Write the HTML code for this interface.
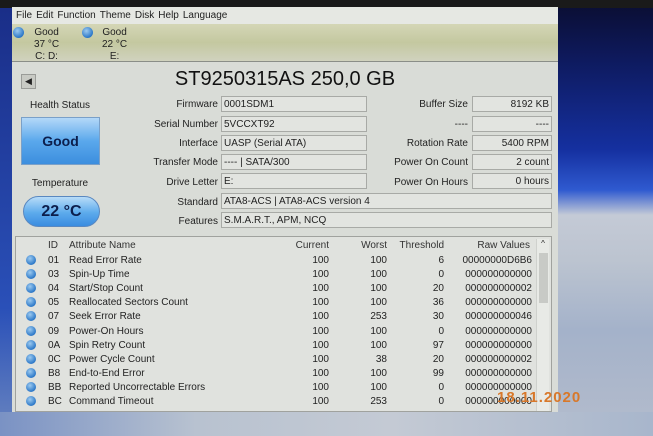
<!DOCTYPE html>
<html><head><meta charset="utf-8"><style>
*{margin:0;padding:0;box-sizing:border-box}
body{width:653px;height:436px;overflow:hidden;position:relative;font-family:"Liberation Sans","DejaVu Sans",sans-serif;color:#222;background:#a8b4c8}
.a{position:absolute}
#top{left:0;top:0;width:653px;height:8px;background:#1a1a1a}
#lstrip{left:0;top:8px;width:12px;height:428px;background:linear-gradient(180deg,#1a2e88,#2a50b8 300px,#6a86c0)}
#right{left:558px;top:0;width:95px;height:436px;background:linear-gradient(180deg,#0a0d30 0,#0e1a5e 60px,#1530a0 150px,#2f5ad0 190px,#c4cad6 215px,#bcc4d0 260px,#a4b2ca 330px,#b4bccc 436px)}
#bottom{left:0;top:412px;width:653px;height:24px;background:linear-gradient(90deg,#7a92c4,#b8c2d0 30%,#c4cad4 60%,#a8b6cc)}
#win{left:12px;top:7px;width:546px;height:405px;background:#d9dcd7}
#menu{left:0;top:0;width:546px;height:17px;background:#e6e8e3;font-size:10px;padding:3px 0 0 4px;word-spacing:3px}
#menu span{margin-right:4px}
#disks{left:0;top:17px;width:546px;height:38px;background:linear-gradient(180deg,#d4d6b6,#c4c8a0 50%,#d0d2be);border-bottom:1px solid #8a8e88;font-size:10px}
.dot{width:11px;height:11px;border-radius:50%;background:radial-gradient(circle at 40% 35%,#9ccaf0,#2c78c8 70%,#1a5aa8)}
.lbl{font-size:10px;text-align:right;width:120px}
.box{background:#e2e4e0;border:1px solid #a8aaa6;font-size:10px;height:16px;padding:1px 2px;line-height:13px}
.r{text-align:right}
#table{left:3px;top:229px;width:537px;height:176px;background:#e0e2de;border:1px solid #a0a29e;font-size:10px}
.row{position:absolute;left:0;width:520px;height:14px;line-height:14px}
.row span{position:absolute}
</style></head><body>
<div class="a" id="right"></div>
<div class="a" id="top"></div>
<div class="a" id="lstrip"></div>
<div class="a" id="bottom"></div>
<div class="a" id="win">
 <div class="a" id="menu"><span>File</span><span>Edit</span><span>Function</span><span>Theme</span><span>Disk</span><span>Help</span><span>Language</span></div>
 <div class="a" id="disks">
  <div class="a dot" style="left:1px;top:3px"></div>
  <div class="a" style="left:22px;top:3px;line-height:12px;text-align:center">Good<br>37 °C<br>C: D:</div>
  <div class="a dot" style="left:70px;top:3px"></div>
  <div class="a" style="left:90px;top:3px;line-height:12px;text-align:center">Good<br>22 °C<br>E:</div>
 </div>
 <div class="a" style="left:9px;top:67px;width:15px;height:15px;background:#c8cac4;border:1px solid #9a9c98;font-size:9px;line-height:13px;text-align:center">◀</div>
 <div class="a" style="left:120px;top:61px;width:306px;text-align:center;font-size:20px;color:#111">ST9250315AS 250,0 GB</div>
 <div class="a" style="left:8px;top:93px;width:80px;text-align:center;font-size:10px">Health Status</div>
 <div class="a" style="left:9px;top:110px;width:79px;height:48px;background:linear-gradient(180deg,#b4d8f8,#5aa8ec 50%,#3c8ede);border:1px solid #7aa0c8;font-size:14px;font-weight:bold;color:#0c1e4c;text-align:center;line-height:46px">Good</div>
 <div class="a" style="left:8px;top:171px;width:80px;text-align:center;font-size:10px">Temperature</div>
 <div class="a" style="left:11px;top:189px;width:77px;height:31px;border-radius:16px;background:linear-gradient(180deg,#b8dcf8,#5caaec 55%,#3a8ce0);border:1px solid #5a88c0;font-size:16px;font-weight:bold;color:#0c1e4c;text-align:center;line-height:29px">22 °C</div>

 <div class="a lbl" style="left:86px;top:92px">Firmware</div><div class="a box" style="left:209px;top:89px;width:146px">0001SDM1</div>
 <div class="a lbl" style="left:86px;top:112px">Serial Number</div><div class="a box" style="left:209px;top:109px;width:146px">5VCCXT92</div>
 <div class="a lbl" style="left:86px;top:131px">Interface</div><div class="a box" style="left:209px;top:128px;width:146px">UASP (Serial ATA)</div>
 <div class="a lbl" style="left:86px;top:150px">Transfer Mode</div><div class="a box" style="left:209px;top:147px;width:146px">---- | SATA/300</div>
 <div class="a lbl" style="left:86px;top:170px">Drive Letter</div><div class="a box" style="left:209px;top:166px;width:146px">E:</div>
 <div class="a lbl" style="left:86px;top:190px">Standard</div><div class="a box" style="left:209px;top:186px;width:331px">ATA8-ACS | ATA8-ACS version 4</div>
 <div class="a lbl" style="left:86px;top:209px">Features</div><div class="a box" style="left:209px;top:205px;width:331px">S.M.A.R.T., APM, NCQ</div>

 <div class="a lbl" style="left:336px;top:92px">Buffer Size</div><div class="a box r" style="left:460px;top:89px;width:80px">8192 KB</div>
 <div class="a lbl" style="left:336px;top:112px">----</div><div class="a box r" style="left:460px;top:109px;width:80px">----</div>
 <div class="a lbl" style="left:336px;top:131px">Rotation Rate</div><div class="a box r" style="left:460px;top:128px;width:80px">5400 RPM</div>
 <div class="a lbl" style="left:336px;top:150px">Power On Count</div><div class="a box r" style="left:460px;top:147px;width:80px">2 count</div>
 <div class="a lbl" style="left:336px;top:170px">Power On Hours</div><div class="a box r" style="left:460px;top:166px;width:80px">0 hours</div>

 <div class="a" id="table">
  <div class="a" style="right:2px;top:2px;width:13px;height:172px;background:#e8eae6;border-left:1px solid #cfd1cd"><div style="position:absolute;left:2px;top:14px;width:9px;height:50px;background:#c8cac6"></div><div style="font-size:8px;text-align:center">^</div></div>
  <div class="row" style="top:2px;color:#333"><span style="left:32px">ID</span><span style="left:53px">Attribute Name</span><span style="right:207px">Current</span><span style="right:149px">Worst</span><span style="right:92px">Threshold</span><span style="right:6px">Raw Values</span></div>
 </div>
</div>
<div class="a" style="left:497px;top:389px;font-size:15px;font-weight:bold;color:#d8782a;letter-spacing:1px">18.11.2020</div>
<script>
var d=[["01","Read Error Rate",100,100,6,"00000000D6B6"],["03","Spin-Up Time",100,100,0,"000000000000"],["04","Start/Stop Count",100,100,20,"000000000002"],["05","Reallocated Sectors Count",100,100,36,"000000000000"],["07","Seek Error Rate",100,253,30,"000000000046"],["09","Power-On Hours",100,100,0,"000000000000"],["0A","Spin Retry Count",100,100,97,"000000000000"],["0C","Power Cycle Count",100,38,20,"000000000002"],["B8","End-to-End Error",100,100,99,"000000000000"],["BB","Reported Uncorrectable Errors",100,100,0,"000000000000"],["BC","Command Timeout",100,253,0,"000000000000"]];
var t=document.getElementById('table'),h='';
d.forEach(function(r,i){h+='<div class="row" style="top:'+(17+i*14.1)+'px"><span class="dot" style="left:10px;top:1px;width:10px;height:10px;border-radius:50%"></span><span style="left:32px">'+r[0]+'</span><span style="left:53px">'+r[1]+'</span><span style="right:207px">'+r[2]+'</span><span style="right:149px">'+r[3]+'</span><span style="right:92px">'+r[4]+'</span><span style="right:4px">'+r[5]+'</span></div>';});
t.insertAdjacentHTML('beforeend',h);
</script>
</body></html>
